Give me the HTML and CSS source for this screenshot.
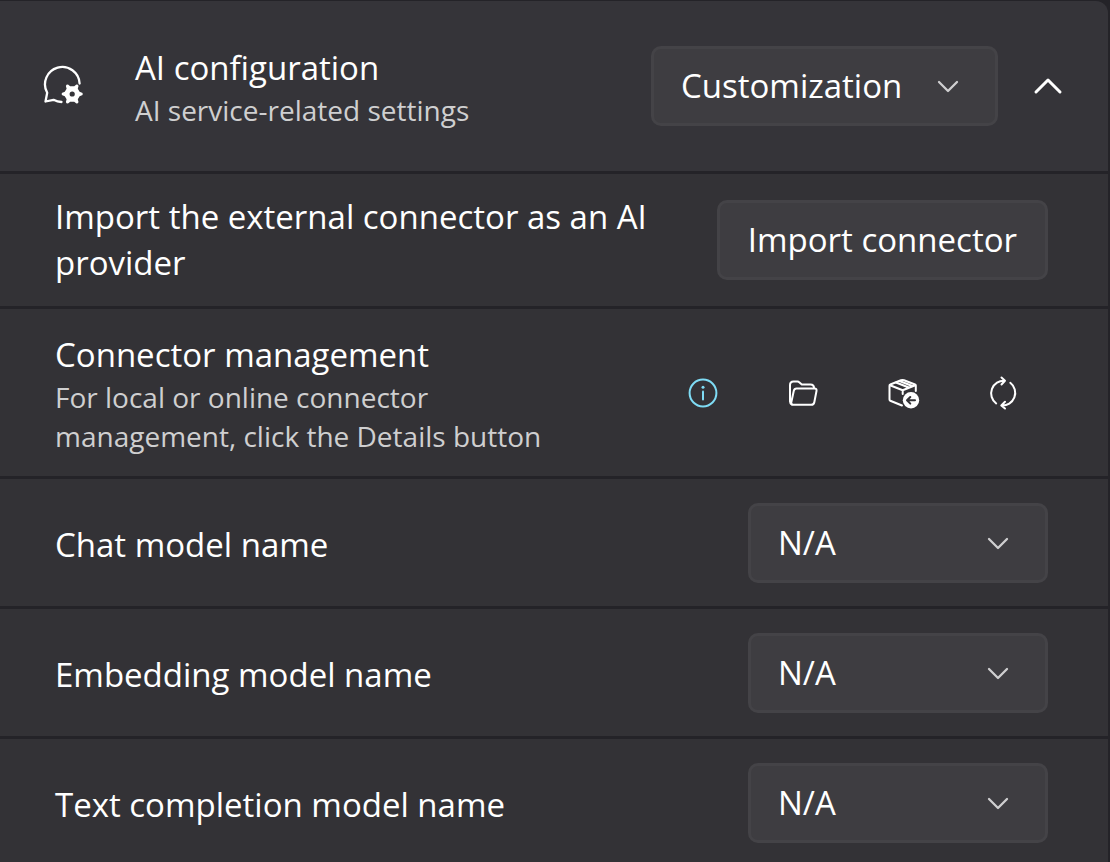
FILE: index.html
```html
<!DOCTYPE html>
<html lang="en">
<head>
<meta charset="utf-8">
<meta name="viewport" content="width=device-width, initial-scale=1">
<title>AI configuration</title>
<link rel="stylesheet" href="styles.css">
</head>
<body>
<main class="card">
  <header class="header">
    <svg class="header-icon" viewBox="0 0 42 42" fill="none" aria-hidden="true">
      <path d="M37.600 18.500A17.300 17.300 0 1 0 5.200 27.700L3.500 36.500L11.500 34.800Q15.500 36.800 19.500 37" stroke="currentColor" stroke-width="2.300" stroke-linecap="round" stroke-linejoin="round"/>
      <path fill-rule="evenodd" fill="currentColor" d="M24.500 19.700L26 19.500L28.200 21.300H32.200L34.400 19.500L35.900 19.700L36.500 21L35.800 23.700L37.600 26.800L40.600 28V30L37.600 31.200L35.800 34.300L36.500 37L35.900 38.300L34.400 38.500L32.200 36.700H28.200L26 38.500L24.500 38.300L23.900 37L24.600 34.300L22.800 31.200L19.800 30V28L22.800 26.800L24.600 23.700L23.900 21ZM30.200 26.400A2.600 2.600 0 1 0 30.200 31.600A2.600 2.600 0 1 0 30.200 26.400Z"/>
    </svg>
    <div class="text">
      <h1 class="title">AI configuration</h1>
      <p class="description">AI service-related settings</p>
    </div>
    <div class="dropdown dropdown-wide">
      <select class="select" aria-label="AI service"><option>Customization</option></select>
      <svg class="chevron" viewBox="0 0 22 14" fill="none" aria-hidden="true"><path d="M2 3L11 12L20 3" stroke="currentColor" stroke-width="2.300" stroke-linecap="round" stroke-linejoin="round"/></svg>
    </div>
    <button class="expander" type="button" aria-label="Collapse" aria-expanded="true">
      <svg class="expander-icon" viewBox="0 0 30 18" fill="none" aria-hidden="true"><path d="M3 15L15 3L27 15" stroke="currentColor" stroke-width="3" stroke-linecap="round" stroke-linejoin="round"/></svg>
    </button>
  </header>

  <section class="row">
    <h2 class="title">Import the external connector as an AI provider</h2>
    <button class="button" type="button">Import connector</button>
  </section>

  <section class="row">
    <div class="text">
      <h2 class="title">Connector management</h2>
      <p class="description">For local or online connector management, click the Details button</p>
    </div>
    <div class="actions">
      <button class="icon-button accent" type="button" aria-label="Details">
        <svg class="icon" viewBox="0 0 32 32" fill="none" aria-hidden="true"><circle cx="16" cy="16" r="13.400" stroke="currentColor" stroke-width="2"/><path d="M16 14.500V22.500" stroke="currentColor" stroke-width="2" stroke-linecap="round"/><circle cx="16" cy="10.300" r="1.500" fill="currentColor"/></svg>
      </button>
      <button class="icon-button" type="button" aria-label="Open folder">
        <svg class="icon" viewBox="0 0 32 32" fill="none" stroke="currentColor" stroke-width="2" stroke-linejoin="round" stroke-linecap="round" aria-hidden="true"><path d="M5 27.500Q3 26.500 3 24.500V8Q3 4.500 6.500 4.500H10.500Q11.500 4.500 12.200 5.200L14.800 7.500H23.500Q27 7.500 27 11"/><path d="M9.500 11.500H27.500Q30 11.500 29.500 14L27.300 25.200Q26.800 27.800 24.200 27.800H6.200Q3.800 27.800 4.300 25.200L6.800 13.800Q7.300 11.500 9.500 11.500Z"/></svg>
      </button>
      <button class="icon-button" type="button" aria-label="Import package">
        <svg class="icon" viewBox="0 0 32 32" fill="none" stroke="currentColor" stroke-width="2" stroke-linejoin="round" stroke-linecap="round" aria-hidden="true"><path d="M15 28.500L3.300 23.800Q2.500 23.400 2.500 22.500V8.700Q2.500 7.800 3.300 7.500L14 3.200Q15.500 2.600 17 3.200L28 7.500Q28.800 7.800 28.800 8.700V14"/><path d="M3 8.200L15.700 13.200L28.300 8.200M15.700 13.200V17M9 5.500L21.800 10.500M12.500 4L25.300 9"/><circle cx="24" cy="23.300" r="8.200" fill="currentColor" stroke="none"/><path d="M28 23.300H20.500M23.300 20L20 23.300L23.300 26.600" stroke="#333236"/></svg>
      </button>
      <button class="icon-button" type="button" aria-label="Refresh">
        <svg class="icon" viewBox="0 0 32 32" fill="none" stroke="currentColor" stroke-width="2" stroke-linejoin="round" stroke-linecap="round" aria-hidden="true"><path d="M9.200 26.500A12.700 12.700 0 0 1 17.800 3.700M14.500 0.500L18 3.700L14.500 7.500M23.300 5.800A12.700 12.700 0 0 1 14.500 28.500M18 24.700L14.300 28.500L18 31.500"/></svg>
      </button>
    </div>
  </section>

  <section class="row">
    <label class="title label" for="chat-model">Chat model name</label>
    <div class="dropdown">
      <select class="select" id="chat-model"><option>N/A</option></select>
      <svg class="chevron" viewBox="0 0 22 14" fill="none" aria-hidden="true"><path d="M2 3L11 12L20 3" stroke="currentColor" stroke-width="2.300" stroke-linecap="round" stroke-linejoin="round"/></svg>
    </div>
  </section>

  <section class="row">
    <label class="title label" for="embedding-model">Embedding model name</label>
    <div class="dropdown">
      <select class="select" id="embedding-model"><option>N/A</option></select>
      <svg class="chevron" viewBox="0 0 22 14" fill="none" aria-hidden="true"><path d="M2 3L11 12L20 3" stroke="currentColor" stroke-width="2.300" stroke-linecap="round" stroke-linejoin="round"/></svg>
    </div>
  </section>

  <section class="row">
    <label class="title label" for="completion-model">Text completion model name</label>
    <div class="dropdown">
      <select class="select" id="completion-model"><option>N/A</option></select>
      <svg class="chevron" viewBox="0 0 22 14" fill="none" aria-hidden="true"><path d="M2 3L11 12L20 3" stroke="currentColor" stroke-width="2.300" stroke-linecap="round" stroke-linejoin="round"/></svg>
    </div>
  </section>
</main>
</body>
</html>
```
FILE: styles.css
```css
* {
  box-sizing: border-box;
}

body {
  margin: 0;
  overflow: hidden;
  background: #242328;
  color: #fff;
  font-family: "Open Sans", sans-serif;
  font-size: 33px;
  line-height: 46px;
}

.card {
  display: flex;
  flex-direction: column;
  gap: 3px;
  padding: 1px 2px 0 0;
}

.header,
.row {
  display: flex;
  align-items: center;
}

.header {
  gap: 10px;
  min-height: 170px;
  padding: 20px 20px 20px 42px;
  border-top-right-radius: 12px;
  background: #353439;
}

.row {
  gap: 60px;
  padding: 20px 60px 20px 55px;
  min-height: 127px;
  background: #333236;
}

.header-icon {
  flex: none;
  width: 42px;
  height: 42px;
  margin-right: 41px;
}

.text,
.title {
  flex: 1;
}

.text {
  padding-top: 3px;
}

.title,
.description {
  margin: 0;
  font-weight: 400;
}

.title {
  font-size: 33px;
  line-height: 46px;
}

.label {
  padding-top: 4px;
}

.description {
  color: #cfcfd0;
  font-size: 28px;
  line-height: 39px;
}

.button,
.select {
  height: 80px;
  border: 3px solid #444347;
  border-radius: 10px;
  background: #3e3d41;
  color: inherit;
  font: inherit;
}

.button {
  flex: none;
  padding: 0 28px;
}

.dropdown {
  display: grid;
  flex: none;
  align-items: center;
  width: 300px;
}

.dropdown-wide {
  width: 347px;
}

.select {
  grid-area: 1 / 1;
  width: 100%;
  padding: 0 27px;
  appearance: none;
}

.chevron {
  grid-area: 1 / 1;
  justify-self: end;
  width: 22px;
  height: 14px;
  margin-right: 39px;
  color: #cfcfd0;
  pointer-events: none;
}

.expander,
.icon-button {
  display: grid;
  place-items: center;
  height: 80px;
  padding: 0;
  border: 0;
  background: none;
  color: inherit;
}

.expander {
  width: 80px;
}

.expander-icon {
  width: 30px;
  height: 18px;
}

.actions {
  display: flex;
  flex: none;
  gap: 10px;
}

.icon-button {
  width: 90px;
}

.icon {
  width: 32px;
  height: 32px;
  overflow: visible;
}

.accent {
  color: #7fdcf5;
}
```
